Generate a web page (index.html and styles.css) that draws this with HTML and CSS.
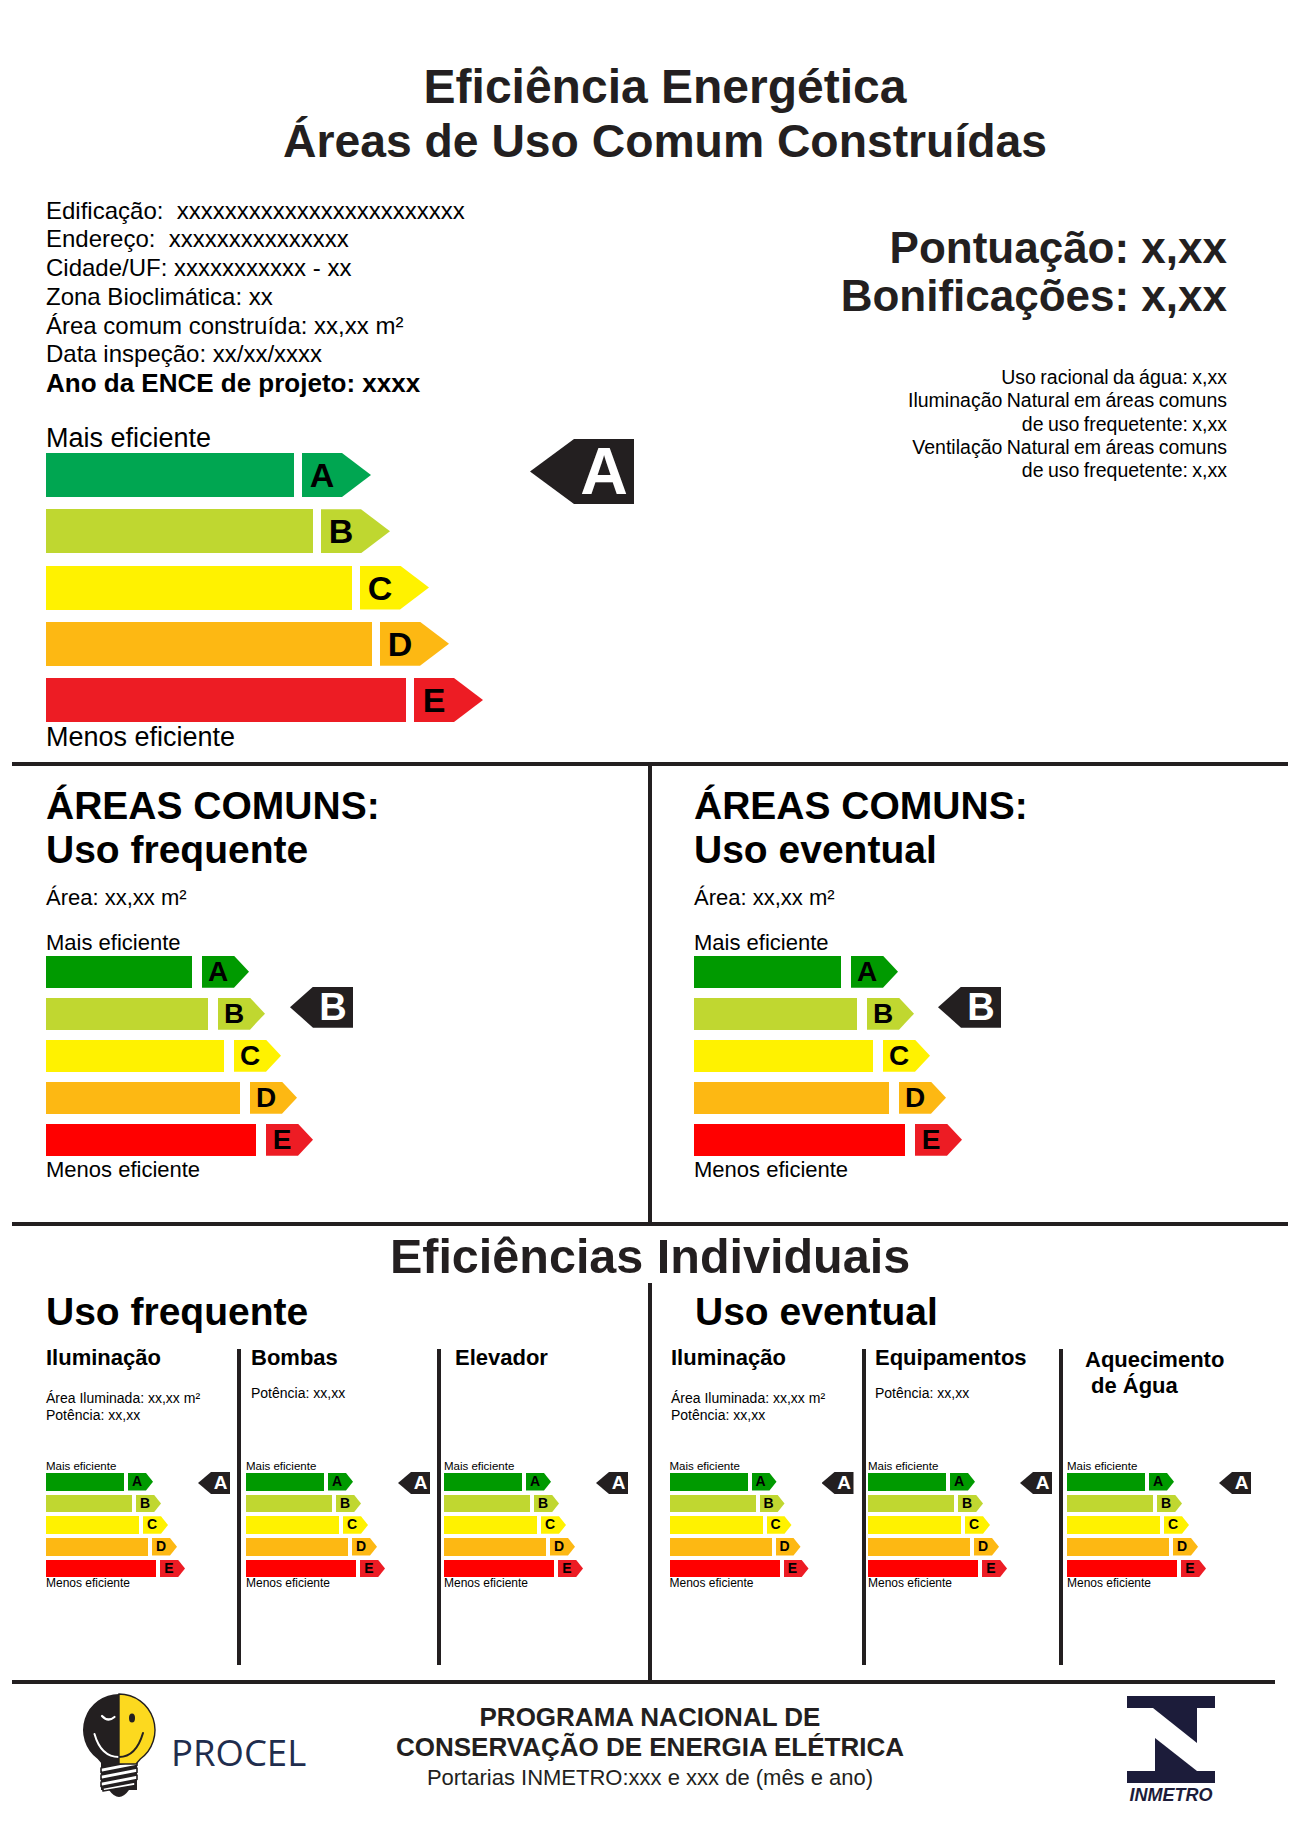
FILE: index.html
```html
<!DOCTYPE html>
<html lang="pt-BR">
<head>
<meta charset="utf-8">
<title>Eficiência Energética – Áreas de Uso Comum Construídas</title>
<link rel="stylesheet" href="styles.css">
</head>
<body>
<div class="page">
  <header class="title">
    <div class="t1">Eficiência Energética</div>
    <div class="t2">Áreas de Uso Comum Construídas</div>
  </header>

  <section class="top">
    <div class="top-left">
      <div class="info">
        <div>Edificação:&nbsp; xxxxxxxxxxxxxxxxxxxxxxxx</div>
        <div>Endereço:&nbsp; xxxxxxxxxxxxxxx</div>
        <div>Cidade/UF: xxxxxxxxxxx - xx</div>
        <div>Zona Bioclimática: xx</div>
        <div>Área comum construída: xx,xx m²</div>
        <div>Data inspeção: xx/xx/xxxx</div>
        <div class="info-bold">Ano da ENCE de projeto: xxxx</div>
      </div>
      <div class="scale-wrap sw-lg">
        <div class="scale sc-lg">
          <div class="lbl">Mais eficiente</div>
          <div class="rows">
            <div class="row"><div class="bar a" style="width:248px"></div><div class="arr a">A</div></div>
            <div class="row"><div class="bar b" style="width:267px"></div><div class="arr b">B</div></div>
            <div class="row"><div class="bar c" style="width:306px"></div><div class="arr c">C</div></div>
            <div class="row"><div class="bar d" style="width:326px"></div><div class="arr d">D</div></div>
            <div class="row"><div class="bar e" style="width:360px"></div><div class="arr e">E</div></div>
          </div>
          <div class="lbl lbl-low">Menos eficiente</div>
        </div>
        <div class="ind">A</div>
      </div>
    </div>
    <div class="top-right">
      <div class="score">Pontuação: x,xx</div>
      <div class="score">Bonificações: x,xx</div>
      <div class="bonus">
        <div>Uso racional da água: x,xx</div>
        <div>Iluminação Natural em áreas comuns</div>
        <div>de uso frequetente: x,xx</div>
        <div>Ventilação Natural em áreas comuns</div>
        <div>de uso frequetente: x,xx</div>
      </div>
    </div>
  </section>

  <section class="commons">
    <div class="panel">
      <div class="h-area">ÁREAS COMUNS:</div>
      <div class="h-area">Uso frequente</div>
      <div class="area-line">Área: xx,xx m²</div>
      <div class="scale-wrap sw-md">
        <div class="scale sc-md">
          <div class="lbl">Mais eficiente</div>
          <div class="rows">
            <div class="row"><div class="bar a" style="width:146px"></div><div class="arr a">A</div></div>
            <div class="row"><div class="bar b" style="width:162px"></div><div class="arr b">B</div></div>
            <div class="row"><div class="bar c" style="width:178px"></div><div class="arr c">C</div></div>
            <div class="row"><div class="bar d" style="width:194px"></div><div class="arr d">D</div></div>
            <div class="row"><div class="bar e" style="width:210px"></div><div class="arr e">E</div></div>
          </div>
          <div class="lbl lbl-low">Menos eficiente</div>
        </div>
        <div class="ind">B</div>
      </div>
    </div>
    <div class="panel">
      <div class="h-area">ÁREAS COMUNS:</div>
      <div class="h-area">Uso eventual</div>
      <div class="area-line">Área: xx,xx m²</div>
      <div class="scale-wrap sw-md">
        <div class="scale sc-md">
          <div class="lbl">Mais eficiente</div>
          <div class="rows">
            <div class="row"><div class="bar a" style="width:147px"></div><div class="arr a">A</div></div>
            <div class="row"><div class="bar b" style="width:163px"></div><div class="arr b">B</div></div>
            <div class="row"><div class="bar c" style="width:179px"></div><div class="arr c">C</div></div>
            <div class="row"><div class="bar d" style="width:195px"></div><div class="arr d">D</div></div>
            <div class="row"><div class="bar e" style="width:211px"></div><div class="arr e">E</div></div>
          </div>
          <div class="lbl lbl-low">Menos eficiente</div>
        </div>
        <div class="ind">B</div>
      </div>
    </div>
  </section>

  <div class="indiv-title">Eficiências Individuais</div>

  <section class="indiv">
    <div class="half">
      <div class="half-title">Uso frequente</div>
      <div class="cols">
        <div class="col c1">
          <div class="col-head">
            <div class="col-title">Iluminação</div>
            <div class="col-info">Área Iluminada: xx,xx m²<br>Potência: xx,xx</div>
          </div>
          <div class="scale-wrap sw-sm">
            <div class="scale sc-sm">
              <div class="lbl">Mais eficiente</div>
              <div class="rows">
                <div class="row"><div class="bar a" style="width:78px"></div><div class="arr a">A</div></div>
                <div class="row"><div class="bar b" style="width:86px"></div><div class="arr b">B</div></div>
                <div class="row"><div class="bar c" style="width:93px"></div><div class="arr c">C</div></div>
                <div class="row"><div class="bar d" style="width:102px"></div><div class="arr d">D</div></div>
                <div class="row"><div class="bar e" style="width:110px"></div><div class="arr e">E</div></div>
              </div>
              <div class="lbl lbl-low">Menos eficiente</div>
            </div>
            <div class="ind">A</div>
          </div>
        </div>
        <div class="col c2">
          <div class="col-head">
            <div class="col-title">Bombas</div>
            <div class="col-info info-one">Potência: xx,xx</div>
          </div>
          <div class="scale-wrap sw-sm">
            <div class="scale sc-sm">
              <div class="lbl">Mais eficiente</div>
              <div class="rows">
                <div class="row"><div class="bar a" style="width:78px"></div><div class="arr a">A</div></div>
                <div class="row"><div class="bar b" style="width:86px"></div><div class="arr b">B</div></div>
                <div class="row"><div class="bar c" style="width:93px"></div><div class="arr c">C</div></div>
                <div class="row"><div class="bar d" style="width:102px"></div><div class="arr d">D</div></div>
                <div class="row"><div class="bar e" style="width:110px"></div><div class="arr e">E</div></div>
              </div>
              <div class="lbl lbl-low">Menos eficiente</div>
            </div>
            <div class="ind">A</div>
          </div>
        </div>
        <div class="col c3">
          <div class="col-head">
            <div class="col-title">Elevador</div>
          </div>
          <div class="scale-wrap sw-sm">
            <div class="scale sc-sm">
              <div class="lbl">Mais eficiente</div>
              <div class="rows">
                <div class="row"><div class="bar a" style="width:78px"></div><div class="arr a">A</div></div>
                <div class="row"><div class="bar b" style="width:86px"></div><div class="arr b">B</div></div>
                <div class="row"><div class="bar c" style="width:93px"></div><div class="arr c">C</div></div>
                <div class="row"><div class="bar d" style="width:102px"></div><div class="arr d">D</div></div>
                <div class="row"><div class="bar e" style="width:110px"></div><div class="arr e">E</div></div>
              </div>
              <div class="lbl lbl-low">Menos eficiente</div>
            </div>
            <div class="ind">A</div>
          </div>
        </div>
      </div>
    </div>
    <div class="half">
      <div class="half-title">Uso eventual</div>
      <div class="cols">
        <div class="col c4">
          <div class="col-head">
            <div class="col-title">Iluminação</div>
            <div class="col-info">Área Iluminada: xx,xx m²<br>Potência: xx,xx</div>
          </div>
          <div class="scale-wrap sw-sm">
            <div class="scale sc-sm">
              <div class="lbl">Mais eficiente</div>
              <div class="rows">
                <div class="row"><div class="bar a" style="width:78px"></div><div class="arr a">A</div></div>
                <div class="row"><div class="bar b" style="width:86px"></div><div class="arr b">B</div></div>
                <div class="row"><div class="bar c" style="width:93px"></div><div class="arr c">C</div></div>
                <div class="row"><div class="bar d" style="width:102px"></div><div class="arr d">D</div></div>
                <div class="row"><div class="bar e" style="width:110px"></div><div class="arr e">E</div></div>
              </div>
              <div class="lbl lbl-low">Menos eficiente</div>
            </div>
            <div class="ind">A</div>
          </div>
        </div>
        <div class="col c5">
          <div class="col-head">
            <div class="col-title">Equipamentos</div>
            <div class="col-info info-one">Potência: xx,xx</div>
          </div>
          <div class="scale-wrap sw-sm">
            <div class="scale sc-sm">
              <div class="lbl">Mais eficiente</div>
              <div class="rows">
                <div class="row"><div class="bar a" style="width:78px"></div><div class="arr a">A</div></div>
                <div class="row"><div class="bar b" style="width:86px"></div><div class="arr b">B</div></div>
                <div class="row"><div class="bar c" style="width:93px"></div><div class="arr c">C</div></div>
                <div class="row"><div class="bar d" style="width:102px"></div><div class="arr d">D</div></div>
                <div class="row"><div class="bar e" style="width:110px"></div><div class="arr e">E</div></div>
              </div>
              <div class="lbl lbl-low">Menos eficiente</div>
            </div>
            <div class="ind">A</div>
          </div>
        </div>
        <div class="col c6">
          <div class="col-head">
            <div class="col-title title-two">Aquecimento<br><span class="indent">de Água</span></div>
          </div>
          <div class="scale-wrap sw-sm">
            <div class="scale sc-sm">
              <div class="lbl">Mais eficiente</div>
              <div class="rows">
                <div class="row"><div class="bar a" style="width:78px"></div><div class="arr a">A</div></div>
                <div class="row"><div class="bar b" style="width:86px"></div><div class="arr b">B</div></div>
                <div class="row"><div class="bar c" style="width:93px"></div><div class="arr c">C</div></div>
                <div class="row"><div class="bar d" style="width:102px"></div><div class="arr d">D</div></div>
                <div class="row"><div class="bar e" style="width:110px"></div><div class="arr e">E</div></div>
              </div>
              <div class="lbl lbl-low">Menos eficiente</div>
            </div>
            <div class="ind">A</div>
          </div>
        </div>
      </div>
    </div>
  </section>

  <div class="foot-line"></div>

  <footer class="footer">
    <div class="procel">
      <svg class="bulb" width="74" height="106" viewBox="0 0 74 106" aria-hidden="true">
        <rect x="19" y="66" width="36" height="31" fill="#231f20"/>
        <g fill="#ffffff" stroke="#231f20" stroke-width="1.6" stroke-linejoin="round">
          <path d="M19 75 L55 68 L55 72.5 L19 79.5 Z"/>
          <path d="M19 82 L55 75 L55 79.5 L19 86.5 Z"/>
          <path d="M19 89 L55 82 L55 86.5 L19 93.5 Z"/>
          <path d="M21 95 L53 89 L53 92.5 L21 98 Z"/>
        </g>
        <path d="M27 97 Q37 111 47 97 Z" fill="#231f20"/>
        <path d="M37 1 A36 36 0 0 0 15.7 66 L20 71 L37 71 Z" fill="#231f20"/>
        <path d="M37 1 A36 36 0 0 1 58.3 66 L54 71 L37 71 Z" fill="#fcd91f" stroke="#231f20" stroke-width="1.4"/>
        <path d="M20 23 Q26 29.5 32.5 24" fill="none" stroke="#ffffff" stroke-width="2.2" stroke-linecap="round"/>
        <ellipse cx="50" cy="25" rx="3" ry="4.6" fill="#231f20"/>
        <path d="M12.5 41 Q19 64 37 64" fill="none" stroke="#ffffff" stroke-width="2" stroke-linecap="round"/>
        <path d="M37 64 Q54 64 61 40" fill="none" stroke="#231f20" stroke-width="2" stroke-linecap="round"/>
      </svg>
      <div class="procel-name">PROCEL</div>
    </div>
    <div class="prog">
      <div class="prog-b">PROGRAMA NACIONAL DE</div>
      <div class="prog-b">CONSERVAÇÃO DE ENERGIA ELÉTRICA</div>
      <div class="prog-r">Portarias INMETRO:xxx e xxx de (mês e ano)</div>
    </div>
    <div class="inmetro">
      <div class="inmetro-logo">
        <svg width="88" height="87" viewBox="0 0 88 87" aria-hidden="true">
          <rect x="0" y="0" width="88" height="12" fill="#1c1c3a"/>
          <polygon points="26,12 70,12 70,47" fill="#1c1c3a"/>
          <polygon points="28,42 28,75 70,75" fill="#1c1c3a"/>
          <rect x="0" y="75" width="88" height="12" fill="#1c1c3a"/>
        </svg>
        <div class="inmetro-name">INMETRO</div>
      </div>
    </div>
  </footer>
</div>
</body>
</html>
```

FILE: styles.css
```css
html, body {
  margin: 0;
  padding: 0;
  background: #ffffff;
}

.page {
  width: 1300px;
  height: 1843px;
  overflow: hidden;
  font-family: "Liberation Sans", Arial, Helvetica, sans-serif;
  color: #000000;
  background: #ffffff;
}

/* ---------- Title ---------- */
.title {
  padding: 60px 0 0 30px;
  text-align: center;
  font-weight: 700;
  color: #231f20;
}
.t1 {
  font-size: 48px;
  line-height: 54px;
}
.t2 {
  font-size: 46.3px;
  line-height: 54px;
}

/* ---------- Top section ---------- */
.top {
  display: flex;
  justify-content: space-between;
  padding: 0 73px 0 46px;
}
.top-left {
  margin-top: 28.5px;
}
.info {
  font-size: 24px;
  line-height: 28.75px;
}
.info-bold {
  font-size: 26px;
  font-weight: 700;
}
.top-right {
  margin-top: 56px;
  text-align: right;
}
.score {
  font-size: 44px;
  line-height: 48px;
  font-weight: 700;
  color: #231f20;
}
.bonus {
  margin-top: 46px;
  margin-right: 0;
  font-size: 19.5px;
  line-height: 23.3px;
  word-spacing: -1px;
}

/* ---------- Rating scales ---------- */
.scale-wrap {
  display: flex;
  align-items: flex-start;
}
.scale {
  flex: 0 0 auto;
}
.rows {
  display: flex;
  flex-direction: column;
  gap: var(--gap);
}
.row {
  display: flex;
  height: var(--h);
}
.bar {
  flex: 0 0 auto;
  height: 100%;
}
.arr {
  flex: 0 0 auto;
  height: 100%;
  margin-left: var(--agap);
  width: calc(var(--box) + var(--tip));
  padding-right: var(--tip);
  box-sizing: border-box;
  text-align: center;
  font-weight: 700;
  font-size: var(--lf);
  line-height: var(--h);
  color: #000000;
  clip-path: polygon(0 0, var(--box) 0, 100% 50%, var(--box) 100%, 0 100%);
}
.ind {
  flex: 0 0 auto;
  background: #231f20;
  color: #ffffff;
  font-weight: 700;
  text-align: center;
  box-sizing: border-box;
  padding-left: var(--itip);
  width: var(--iw);
  height: var(--ih);
  line-height: var(--ih);
  font-size: var(--if);
  margin-top: var(--imt);
  clip-path: polygon(var(--itip) 0, 100% 0, 100% 100%, var(--itip) 100%, 0 50%);
}

/* colours: medium / small scales */
.bar.a, .arr.a { background: #009a00; }
.bar.b, .arr.b { background: #c0d730; }
.bar.c, .arr.c { background: #fff200; }
.bar.d, .arr.d { background: #fdb813; }
.bar.e { background: #ff0000; }
.arr.e { background: #ed1c24; }

/* colours: large scale */
.sc-lg .bar.a, .sc-lg .arr.a { background: #00a651; }
.sc-lg .bar.b, .sc-lg .arr.b { background: #bfd730; }
.sc-lg .bar.e, .sc-lg .arr.e { background: #ed1c24; }

/* large */
.sw-lg {
  margin-top: 26px;
  --iw: 104px;
  --ih: 65px;
  --itip: 44px;
  --if: 66px;
  --imt: 15.3px;
}
.sc-lg {
  width: 484px;
  --h: 44px;
  --gap: 12.25px;
  --agap: 8px;
  --box: 40px;
  --tip: 29px;
  --lf: 34px;
}
.sc-lg .lbl {
  font-size: 27px;
  line-height: 28px;
}
.sc-lg .rows { margin-top: 1.3px; }
.sc-lg .lbl-low { margin-top: 1px; }

/* medium */
.sw-md {
  margin-top: 20.3px;
  --iw: 63px;
  --ih: 41px;
  --itip: 23px;
  --if: 38px;
  --imt: 55.8px;
}
.sc-md {
  width: 244px;
  --h: 32px;
  --gap: 10px;
  --agap: 10px;
  --box: 32px;
  --tip: 15px;
  --lf: 28px;
}
.sc-md .lbl {
  font-size: 22px;
  line-height: 24px;
}
.sc-md .rows { margin-top: 0.8px; }
.sc-md .lbl-low { margin-top: 2.2px; }

/* small */
.sw-sm {
  --iw: 32px;
  --ih: 22px;
  --itip: 13px;
  --if: 19px;
  --imt: 12px;
}
.sc-sm {
  width: 152px;
  --h: 17.5px;
  --gap: 4.17px;
  --agap: 4px;
  --box: 18px;
  --tip: 7px;
  --lf: 14px;
}
.sc-sm .lbl {
  font-size: 11.5px;
  line-height: 12px;
}
.sc-sm .rows { margin-top: 1px; }
.sc-sm .lbl-low {
  font-size: 12px;
  margin-top: 0.3px;
}

/* ---------- Common areas ---------- */
.commons {
  display: flex;
  margin: 11px 12px 0 12px;
  height: 456px;
  border-top: 4px solid #231f20;
  border-bottom: 4px solid #231f20;
}
.panel {
  flex: 0 0 636px;
  box-sizing: border-box;
  padding: 17.5px 0 0 34px;
}
.panel + .panel {
  flex: 1 1 auto;
  border-left: 4px solid #231f20;
  padding-left: 42px;
}
.h-area {
  font-size: 39px;
  line-height: 44.5px;
  font-weight: 700;
  color: #000000;
}
.area-line {
  margin-top: 12px;
  font-size: 22px;
  line-height: 26px;
}

/* ---------- Individual efficiencies ---------- */
.indiv-title {
  margin-top: 3px;
  text-align: center;
  font-size: 48.5px;
  line-height: 54px;
  font-weight: 700;
  color: #231f20;
}
.indiv {
  display: flex;
  margin: 0 12px;
  height: 397px;
}
.half {
  flex: 0 0 636px;
  box-sizing: border-box;
  padding-top: 6.5px;
}
.half + .half {
  flex: 1 1 auto;
  border-left: 4px solid #231f20;
}
.half-title {
  padding-left: 34px;
  font-size: 39px;
  line-height: 44px;
  font-weight: 700;
}
.half + .half .half-title {
  padding-left: 43px;
}
.cols {
  display: grid;
  margin-top: 15.5px;
  height: 316px;
  grid-template-columns: 225px 200px 211px;
}
.half + .half .cols {
  grid-template-columns: 210px 197px 229px;
}
.col {
  box-sizing: border-box;
  padding-left: var(--pb);
}
.col + .col {
  border-left: 4px solid #231f20;
}
.c1 { --pb: 34px;   --ph: 34px; }
.c2 { --pb: 5px;    --ph: 10px; }
.c3 { --pb: 3px;    --ph: 14px; }
.c4 { --pb: 17.5px; --ph: 19px; }
.c5 { --pb: 2px;    --ph: 9px; }
.c6 { --pb: 4px;    --ph: 22px; }

.col-head {
  display: flow-root;
  height: 111px;
  margin-left: calc(var(--ph) - var(--pb));
}
.col-title {
  margin-top: -3.6px;
  font-size: 22px;
  line-height: 26px;
  font-weight: 700;
}
.title-two {
  margin-top: -1.6px;
}
.indent {
  padding-left: 6px;
}
.col-info {
  margin-top: 18.7px;
  font-size: 14px;
  line-height: 16.5px;
}
.info-one {
  margin-top: 13.6px;
}

/* ---------- Footer ---------- */
.foot-line {
  margin: 0 25px 0 12px;
  border-top: 4px solid #231f20;
}
.footer {
  display: grid;
  grid-template-columns: 1fr auto 1fr;
  height: 160px;
}
.procel {
  display: flex;
  align-items: flex-start;
  padding-left: 82px;
}
.bulb {
  display: block;
  margin-top: 9px;
}
.procel-name {
  margin: 48px 0 0 15px;
  font-family: "Open Sans", "Liberation Sans", sans-serif;
  font-size: 36.5px;
  line-height: 40px;
  font-weight: 400;
  color: #1f2d4d;
}
.prog {
  padding-top: 18px;
  text-align: center;
  color: #231f20;
}
.prog-b {
  font-size: 26px;
  line-height: 30px;
  font-weight: 700;
}
.prog-r {
  margin-top: 1.4px;
  font-size: 22px;
  line-height: 30px;
}
.inmetro {
  display: flex;
  justify-content: flex-end;
  padding-right: 85px;
}
.inmetro-logo {
  margin-top: 12px;
  width: 88px;
}
.inmetro-logo svg {
  display: block;
}
.inmetro-name {
  margin-top: 2.8px;
  font-size: 18px;
  line-height: 18px;
  font-weight: 700;
  font-style: italic;
  color: #1c1c3a;
  text-align: center;
  white-space: nowrap;
}
```
